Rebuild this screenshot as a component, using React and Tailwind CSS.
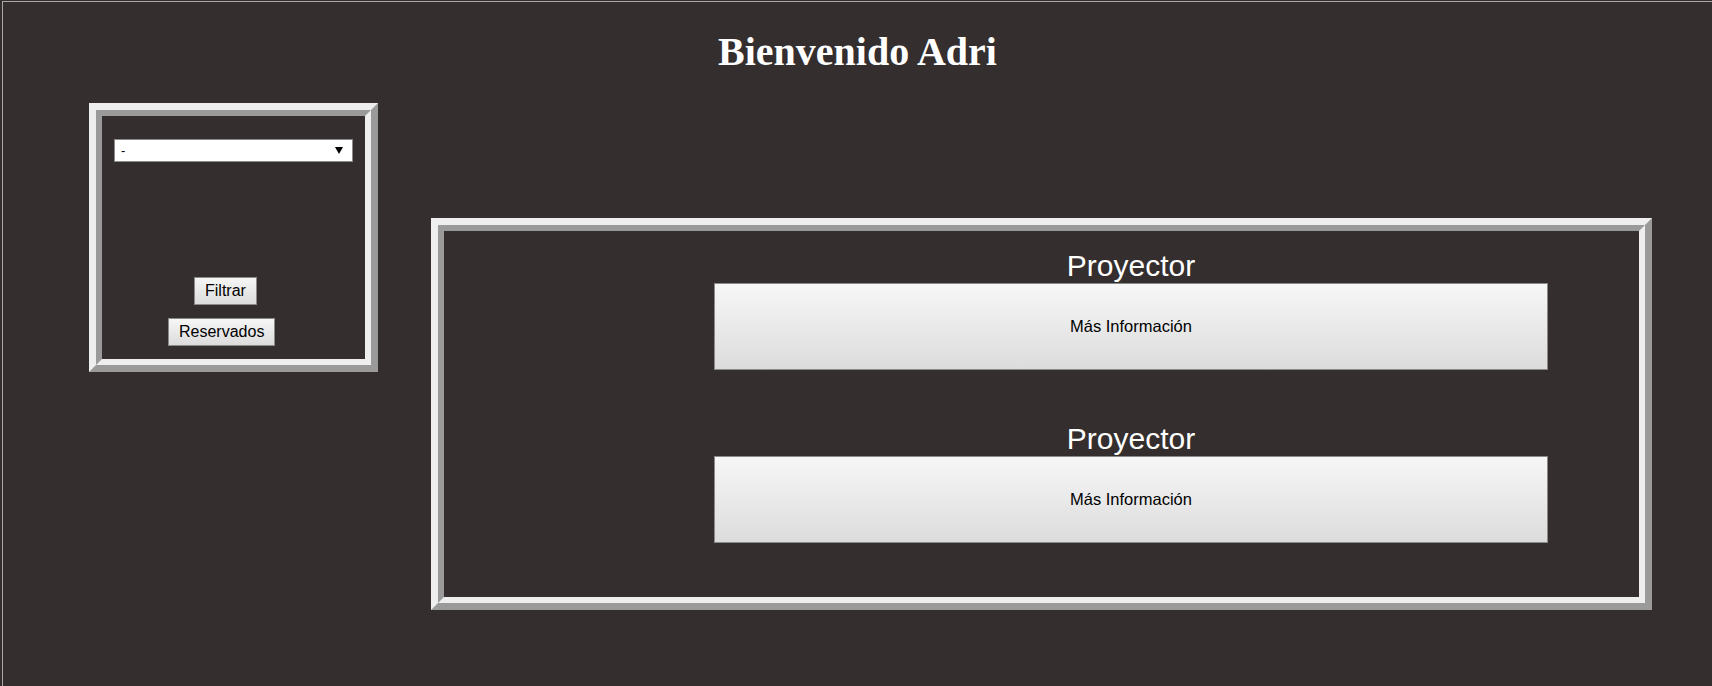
import React from "react";

const Ridge = ({ className, innerClassName, children }) => (
  <div
    className={`border-[7px] border-t-[#eeeeee] border-l-[#eeeeee] border-r-[#9a9a9a] border-b-[#9a9a9a] ${className}`}
  >
    <div
      className={`border-[6px] border-t-[#9a9a9a] border-l-[#9a9a9a] border-r-[#eeeeee] border-b-[#eeeeee] ${innerClassName}`}
    >
      {children}
    </div>
  </div>
);

const SmallButton = ({ label, className }) => (
  <button
    type="button"
    className={`h-[28px] px-[10px] border border-[#8a8a8a] bg-gradient-to-b from-[#f6f6f6] to-[#dcdcdc] text-[16px] leading-[18px] text-black ${className}`}
  >
    {label}
  </button>
);

const Item = ({ title }) => (
  <div className="ml-[270px] w-[834px]">
    <h3 className="text-center text-white text-[30px] leading-[34px] font-normal">
      {title}
    </h3>
    <button
      type="button"
      className="w-full h-[87px] border border-[#8a8a8a] bg-gradient-to-b from-[#f7f7f7] to-[#dcdcdc] text-[16.5px] text-black"
    >
      Más Información
    </button>
  </div>
);

export default function App() {
  const items = ["Proyector", "Proyector"];

  return (
    <div
      className="min-h-screen bg-[#342e2e] overflow-hidden"
      style={{ fontFamily: '"Liberation Sans", Arial, sans-serif' }}
    >
      <div className="mt-[1px] ml-[2px] border-t border-l border-[#a8a8a8] min-h-[685px]">
        <h1
          className="text-center text-white text-[40px] leading-[46px] font-bold mt-[27px] mb-[28px]"
          style={{ fontFamily: '"Liberation Serif", "Times New Roman", serif' }}
        >
          Bienvenido Adri
        </h1>

        <div className="flex items-start">
          {/* Filtros */}
          <Ridge className="ml-[86px] w-[289px] shrink-0" innerClassName="h-[255px] px-[12px] pt-[23px]">
            <div className="h-[23px] bg-white border border-[#8a8a8a] flex items-center justify-between pl-[6px] pr-[9px] text-[13px] text-black">
              <span>-</span>
              <svg width="8" height="7" viewBox="0 0 8 7">
                <polygon points="0,0 8,0 4,7" fill="#000" />
              </svg>
            </div>
            <div className="flex flex-col items-start mt-[115px]">
              <SmallButton label="Filtrar" className="ml-[80px]" />
              <SmallButton label="Reservados" className="ml-[54px] mt-[13px]" />
            </div>
          </Ridge>

          {/* Listado */}
          <Ridge className="ml-[53px] mt-[115px] w-[1221px] shrink-0" innerClassName="h-[378px] pt-[18px]">
            {items.map((t, i) => (
              <div key={i} className={i > 0 ? "mt-[52px]" : ""}>
                <Item title={t} />
              </div>
            ))}
          </Ridge>
        </div>
      </div>
    </div>
  );
}
